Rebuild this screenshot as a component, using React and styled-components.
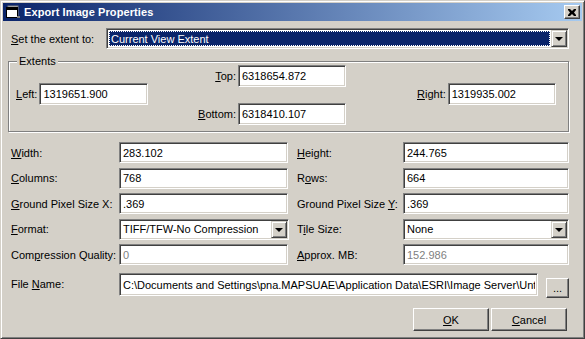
import React from "react";
import styled, { createGlobalStyle } from "styled-components";

const Global = createGlobalStyle`
  html, body { margin: 0; padding: 0; background: #D4D0C8; }
  body { font-family: "Liberation Sans", Arial, sans-serif; font-size: 11px; }
  * { box-sizing: border-box; }
`;

const Window = styled.div`
  width: 585px;
  height: 339px;
  background: #d4d0c8;
  border: 1px solid;
  border-color: #d4d0c8 #404040 #404040 #d4d0c8;
  box-shadow: inset 1px 1px #ffffff, inset -1px -1px #808080;
  padding: 2px;
  display: flex;
  flex-direction: column;
  font-family: "Liberation Sans", Arial, sans-serif;
  font-size: 11px;
  color: #000;
`;

const TitleBar = styled.div`
  height: 18px;
  flex: none;
  display: flex;
  align-items: center;
  padding: 0 2px 0 2px;
  background: linear-gradient(to right, #0a246a, #a6caf0);
  color: #fff;
  font-weight: bold;
  font-size: 11px;
`;

const TitleText = styled.span`
  margin-left: 3px;
  flex: 1;
  letter-spacing: 0.1px;
`;

const CloseButton = styled.div`
  width: 16px;
  height: 14px;
  background: #d4d0c8;
  border: 1px solid;
  border-color: #ffffff #404040 #404040 #ffffff;
  box-shadow: inset -1px -1px #808080;
  display: flex;
  align-items: center;
  justify-content: center;
`;

const Body = styled.div`
  flex: 1;
  display: flex;
  flex-direction: column;
  padding: 7px 13px 0 5px;
`;

const TopRow = styled.div`
  display: flex;
  align-items: center;
  height: 21px;
`;

const TopLabel = styled.span`
  width: 98px;
  padding-left: 3px;
  flex: none;
`;

const Sunken = styled.div`
  background: #ffffff;
  border: 1px solid;
  border-color: #808080 #ffffff #ffffff #808080;
  box-shadow: inset 1px 1px #404040, inset -1px -1px #d4d0c8;
  display: flex;
  align-items: center;
  padding: 2px;
  width: ${(p) => p.$w || "auto"};
  height: ${(p) => p.$h || "21px"};
  flex: ${(p) => (p.$grow ? 1 : "none")};
  color: ${(p) => (p.$disabled ? "#808080" : "#000")};
  white-space: nowrap;
  overflow: hidden;
`;

const FieldText = styled.span`
  flex: 1;
  min-width: 0;
  padding-left: 1px;
  overflow: hidden;
  white-space: nowrap;
  text-overflow: clip;
`;

const Selected = styled.span`
  flex: 1;
  align-self: stretch;
  background: #0a246a;
  color: #fff;
  outline: 1px dotted #ffffff;
  outline-offset: -1px;
  display: flex;
  align-items: center;
  padding-left: 2px;
  margin-right: 1px;
`;

const DropButton = styled.div`
  width: 16px;
  align-self: stretch;
  flex: none;
  background: #d4d0c8;
  border: 1px solid;
  border-color: #d4d0c8 #404040 #404040 #d4d0c8;
  box-shadow: inset 1px 1px #ffffff, inset -1px -1px #808080;
  display: flex;
  align-items: center;
  justify-content: center;
  margin: -1px -1px -1px 0;
`;

const Arrow = styled.span`
  width: 0;
  height: 0;
  border-left: 4px solid transparent;
  border-right: 4px solid transparent;
  border-top: 4px solid #000;
  margin-top: 1px;
`;

const Group = styled.div`
  position: relative;
  margin-top: 12px;
  height: 71px;
  border: 1px solid #808080;
  box-shadow: 1px 1px #ffffff, inset 1px 1px #ffffff;
  display: grid;
  grid-template-columns: 174px 227px 141px;
  align-items: center;
  padding: 0 0 6px 7px;
`;

const Legend = styled.span`
  position: absolute;
  top: -7px;
  left: 8px;
  padding: 0 2px;
  background: #d4d0c8;
  line-height: 13px;
`;

const InlineField = styled.div`
  display: flex;
  align-items: center;
`;

const StackField = styled.div`
  display: grid;
  grid-template-columns: 48px 108px;
  row-gap: 16px;
  align-items: center;
  padding-top: 3px;
`;

const RightLabel = styled.span`
  text-align: right;
  padding-right: 2px;
`;

const PlainLabel = styled.span`
  padding-right: 2px;
`;

const FormGrid = styled.div`
  margin-top: 10px;
  display: grid;
  grid-template-columns: 108px 170px 8px 106px 166px;
  grid-auto-rows: 21px;
  row-gap: 4.6px;
  align-items: center;
  padding-left: 3px;
`;

const Spacer = styled.span``;

const FileRow = styled.div`
  margin-top: 8px;
  display: flex;
  align-items: flex-start;
  padding-left: 3px;
`;

const FileLabel = styled.span`
  width: 108px;
  flex: none;
  line-height: 22px;
`;

const Button = styled.div`
  width: ${(p) => p.$w};
  height: ${(p) => p.$h};
  margin-top: ${(p) => p.$mt || "0"};
  margin-left: ${(p) => p.$ml || "0"};
  flex: none;
  background: #d4d0c8;
  border: 1px solid;
  border-color: #ffffff #404040 #404040 #ffffff;
  box-shadow: inset -1px -1px #808080;
  display: flex;
  align-items: center;
  justify-content: center;
`;

const ButtonRow = styled.div`
  margin-top: 10px;
  display: flex;
  justify-content: flex-end;
  gap: 2px;
  padding-right: 2px;
`;

const U = styled.span`
  text-decoration: underline;
  text-underline-offset: 1px;
`;

const TitleIcon = () => (
  <svg width="16" height="16" viewBox="0 0 16 16">
    <rect x="3" y="2" width="10" height="9" fill="#c0c0c0" stroke="#808080" strokeWidth="1" />
    <rect x="1.5" y="3.5" width="11" height="10" fill="#ffffff" stroke="#000" strokeWidth="1" />
    <rect x="2" y="4" width="10" height="2" fill="#000" />
    <rect x="12" y="12" width="3" height="2" fill="#808080" />
  </svg>
);

const CloseX = () => (
  <svg width="8" height="7" viewBox="0 0 8 7">
    <path d="M0 0h2l2 2 2-2h2v1L6 3.5 8 6v1H6L4 5 2 7H0V6l2-2.5L0 1z" fill="#000" />
  </svg>
);

const Field = ({ children, w, h, disabled }) => (
  <Sunken $w={w} $h={h} $disabled={disabled}>
    <FieldText>{children}</FieldText>
  </Sunken>
);

const Combo = ({ children, w }) => (
  <Sunken $w={w}>
    <FieldText>{children}</FieldText>
    <DropButton>
      <Arrow />
    </DropButton>
  </Sunken>
);

export default function App() {
  return (
    <>
      <Global />
      <Window>
        <TitleBar>
          <TitleIcon />
          <TitleText>Export Image Properties</TitleText>
          <CloseButton>
            <CloseX />
          </CloseButton>
        </TitleBar>
        <Body>
          <TopRow>
            <TopLabel>
              <U>S</U>et the extent to:
            </TopLabel>
            <Sunken $grow $h="21px">
              <Selected>Current View Extent</Selected>
              <DropButton>
                <Arrow />
              </DropButton>
            </Sunken>
          </TopRow>

          <Group>
            <Legend>Extents</Legend>
            <InlineField>
              <PlainLabel>
                <U>L</U>eft:
              </PlainLabel>
              <Field w="109px" h="22px">1319651.900</Field>
            </InlineField>
            <StackField>
              <RightLabel>
                <U>T</U>op:
              </RightLabel>
              <Field w="108px" h="22px">6318654.872</Field>
              <RightLabel>
                <U>B</U>ottom:
              </RightLabel>
              <Field w="108px" h="22px">6318410.107</Field>
            </StackField>
            <InlineField>
              <PlainLabel>
                <U>R</U>ight:
              </PlainLabel>
              <Field w="108px" h="22px">1319935.002</Field>
            </InlineField>
          </Group>

          <FormGrid>
            <span>
              <U>W</U>idth:
            </span>
            <Field w="169px">283.102</Field>
            <Spacer />
            <span>
              <U>H</U>eight:
            </span>
            <Field w="166px">244.765</Field>

            <span>
              <U>C</U>olumns:
            </span>
            <Field w="169px">768</Field>
            <Spacer />
            <span>
              R<U>o</U>ws:
            </span>
            <Field w="166px">664</Field>

            <span>
              <U>G</U>round Pixel Size X:
            </span>
            <Field w="169px">.369</Field>
            <Spacer />
            <span>
              Ground Pixel Size <U>Y</U>:
            </span>
            <Field w="166px">.369</Field>

            <span>
              <U>F</U>ormat:
            </span>
            <Combo w="170px">TIFF/TFW-No Compression</Combo>
            <Spacer />
            <span>
              T<U>i</U>le Size:
            </span>
            <Combo w="166px">None</Combo>

            <span>
              Com<U>p</U>ression Quality:
            </span>
            <Field w="169px" disabled>
              0
            </Field>
            <Spacer />
            <span>
              <U>A</U>pprox. MB:
            </span>
            <Field w="166px" disabled>
              152.986
            </Field>
          </FormGrid>

          <FileRow>
            <FileLabel>
              File <U>N</U>ame:
            </FileLabel>
            <Field w="419px" h="23px">
              C:\Documents and Settings\pna.MAPSUAE\Application Data\ESRI\Image Server\Unt
            </Field>
            <Button $w="23px" $h="20px" $mt="5px" $ml="8px">
              ...
            </Button>
          </FileRow>

          <ButtonRow>
            <Button $w="76px" $h="23px">
              <U>O</U>K
            </Button>
            <Button $w="76px" $h="23px">
              <U>C</U>ancel
            </Button>
          </ButtonRow>
        </Body>
      </Window>
    </>
  );
}
